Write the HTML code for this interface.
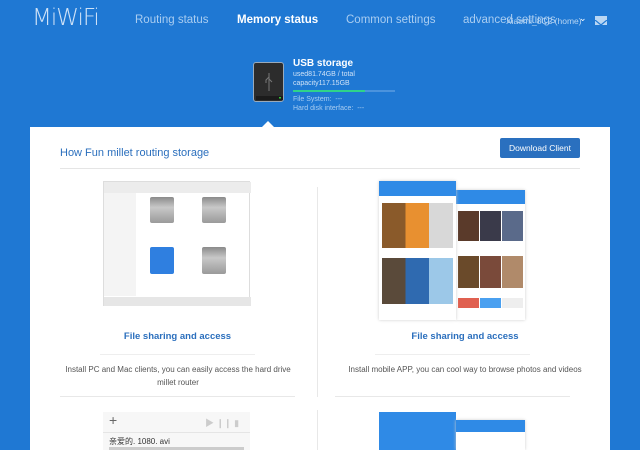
<!DOCTYPE html>
<html><head><meta charset="utf-8"><style>
*{margin:0;padding:0;box-sizing:border-box}
html,body{width:640px;height:450px;overflow:hidden}
body{background:#1f78d3;font-family:"Liberation Sans","Noto Sans CJK SC",sans-serif;position:relative}
.a{position:absolute;white-space:nowrap}
.nav{color:#a9cdf1;font-size:11.5px;top:14px}
.card{position:absolute;left:30px;top:127px;width:580px;height:323px;background:#fff;overflow:hidden}
.blue{color:#2b6fbd}
.hd{background:linear-gradient(#8a8a8a,#c8c8c8 40%,#9a9a9a);border-radius:2px}
</style></head><body>
<div class="a" style="left:32px;top:5px;font-size:23px;color:#cfe2f7;letter-spacing:-1px;font-family:'DejaVu Sans',sans-serif;font-weight:200">MiWiFi</div>
<div class="a nav" style="left:135px">Routing status</div>
<div class="a nav" style="left:237px;color:#fff;font-weight:bold">Memory status</div>
<div class="a nav" style="left:346px">Common settings</div>
<div class="a nav" style="left:463px">advanced settings</div>
<div class="a" style="left:506px;top:16px;font-size:8.5px;color:#b9d6f3">Xiaomi_8C2 (home)</div>
<div class="a" style="left:579px;top:13px;font-size:9px;color:#fff">&#8964;</div>
<div class="a" style="left:595px;top:16px;width:12px;height:9px;background:#b9d6f3"><svg width="12" height="9"><path d="M0 0L6 5L12 0" stroke="#1f78d3" fill="none" stroke-width="1.2"/></svg></div>

<div class="a" style="left:253px;top:62px;width:31px;height:40px;background:#2c2c2c;border:1px solid #9ab;border-radius:3px">
<svg width="31" height="40"><path d="M15 10V28M15 14l-3 3v3M15 16l3 3" stroke="#777" fill="none"/><rect x="2" y="33" width="27" height="4" fill="#1b1b1b"/><rect x="25" y="34" width="2" height="1.5" fill="#3c3"/></svg></div>
<div class="a" style="left:293px;top:58px;font-size:10px;font-weight:bold;color:#fff">USB storage</div>
<div class="a" style="left:293px;top:71px;font-size:7px;color:#cfe2f7">used81.74GB / total</div>
<div class="a" style="left:293px;top:80px;font-size:7px;color:#cfe2f7">capacity117.15GB</div>
<div class="a" style="left:293px;top:90px;width:102px;height:2px;background:#4b93dd"></div>
<div class="a" style="left:293px;top:90px;width:72px;height:2px;background:#2fd38a"></div>
<div class="a" style="left:293px;top:96px;font-size:7px;color:#a9cdf1">File System: &nbsp;---</div>
<div class="a" style="left:293px;top:105px;font-size:7px;color:#a9cdf1">Hard disk interface: &nbsp;---</div>
<div class="a" style="left:262px;top:121px;width:0;height:0;border-left:6px solid transparent;border-right:6px solid transparent;border-bottom:6px solid #fff"></div>

<div class="card">
<div class="a blue" style="left:30px;top:20px;font-size:11px">How Fun millet routing storage</div>
<div class="a" style="left:470px;top:11px;width:80px;height:20px;background:#2a70bf;border-radius:2px;color:#fff;font-size:8.5px;text-align:center;line-height:20px">Download Client</div>
<div class="a" style="left:30px;top:41px;width:520px;height:1px;background:#e5e5e5"></div>
<div class="a" style="left:287px;top:60px;width:1px;height:210px;background:#e8e8e8"></div>
<div class="a" style="left:287px;top:283px;width:1px;height:40px;background:#e8e8e8"></div>

<!-- finder -->
<div class="a" style="left:73px;top:54px;width:147px;height:125px;background:#fff;border:1px solid #ddd">
<div class="a" style="left:0;top:0;width:147px;height:11px;background:#ececec"></div>
<div class="a" style="left:0;top:11px;width:32px;height:103px;background:#f4f4f4"></div>
<div class="a hd" style="left:46px;top:15px;width:24px;height:26px"></div>
<div class="a hd" style="left:98px;top:15px;width:24px;height:26px"></div>
<div class="a" style="left:46px;top:65px;width:24px;height:27px;background:#2f7fe0;border-radius:2px"></div>
<div class="a hd" style="left:98px;top:65px;width:24px;height:27px"></div>
<div class="a" style="left:0;top:115px;width:147px;height:9px;background:#e6e6e6"></div>
</div>
<!-- phones -->
<div class="a" style="left:426px;top:63px;width:69px;height:130px;background:#fff;box-shadow:0 0 3px #ccc">
<div class="a" style="left:0;top:0;width:69px;height:14px;background:#2f8ae6"></div>
<div class="a" style="left:2px;top:21px;width:65px;height:30px;background:linear-gradient(90deg,#5a3a2a 32%,#fff 32% 34%,#3a3a4a 34% 66%,#fff 66% 68%,#5a6a8a 68%)"></div>
<div class="a" style="left:2px;top:66px;width:65px;height:32px;background:linear-gradient(90deg,#6a4a2a 32%,#fff 32% 34%,#7a4a3a 34% 66%,#fff 66% 68%,#b08a6a 68%)"></div>
<div class="a" style="left:2px;top:108px;width:65px;height:10px;background:linear-gradient(90deg,#e06050 32%,#fff 32% 34%,#4aa0f0 34% 66%,#fff 66% 68%,#eee 68%)"></div>
</div>
<div class="a" style="left:349px;top:54px;width:77px;height:139px;background:#fff;box-shadow:0 0 3px #ccc">
<div class="a" style="left:0;top:0;width:77px;height:15px;background:#2f8ae6"></div>
<div class="a" style="left:3px;top:22px;width:71px;height:45px;background:linear-gradient(90deg,#8a5a2a 33%,#e89030 33% 66%,#d8d8d8 66%)"></div>
<div class="a" style="left:3px;top:77px;width:71px;height:46px;background:linear-gradient(90deg,#5a4a3a 33%,#2f6ab0 33% 66%,#9cc8e8 66%)"></div>
</div>
<div class="a blue" style="left:0;top:204px;width:295px;text-align:center;font-size:9.5px;font-weight:bold">File sharing and access</div>
<div class="a blue" style="left:290px;top:204px;width:290px;text-align:center;font-size:9.5px;font-weight:bold">File sharing and access</div>
<div class="a" style="left:70px;top:227px;width:155px;height:1px;background:#eee"></div>
<div class="a" style="left:345px;top:227px;width:155px;height:1px;background:#eee"></div>
<div class="a" style="left:30px;top:236px;width:236px;text-align:center;font-size:8px;color:#555;white-space:normal;line-height:13px">Install PC and Mac clients, you can easily access the hard drive millet router</div>
<div class="a" style="left:290px;top:236px;width:290px;text-align:center;font-size:8px;color:#555;line-height:13px">Install mobile APP, you can cool way to browse photos and videos</div>
<div class="a" style="left:30px;top:269px;width:235px;height:1px;background:#e8e8e8"></div>
<div class="a" style="left:305px;top:269px;width:235px;height:1px;background:#e8e8e8"></div>

<div class="a" style="left:73px;top:285px;width:147px;height:38px;background:#f7f7f7">
<div class="a" style="left:6px;top:0;font-size:14px;color:#666">+</div>
<div class="a" style="left:102px;top:4px;font-size:9px;color:#ccc">▶ ❙❙ ▮</div>
<div class="a" style="left:0;top:20px;width:147px;height:1px;background:#e5e5e5"></div>
<div class="a" style="left:6px;top:24px;font-size:8px;color:#333">亲爱的. 1080. avi</div>
<div class="a" style="left:6px;top:35px;width:135px;height:3px;background:#ccc"></div>
</div>
<div class="a" style="left:349px;top:285px;width:77px;height:38px;background:#2f8ae6"></div>
<div class="a" style="left:426px;top:293px;width:69px;height:30px;background:#fff;box-shadow:0 0 3px #ccc"><div style="height:12px;background:#2f8ae6"></div></div>
</div>
</body></html>
